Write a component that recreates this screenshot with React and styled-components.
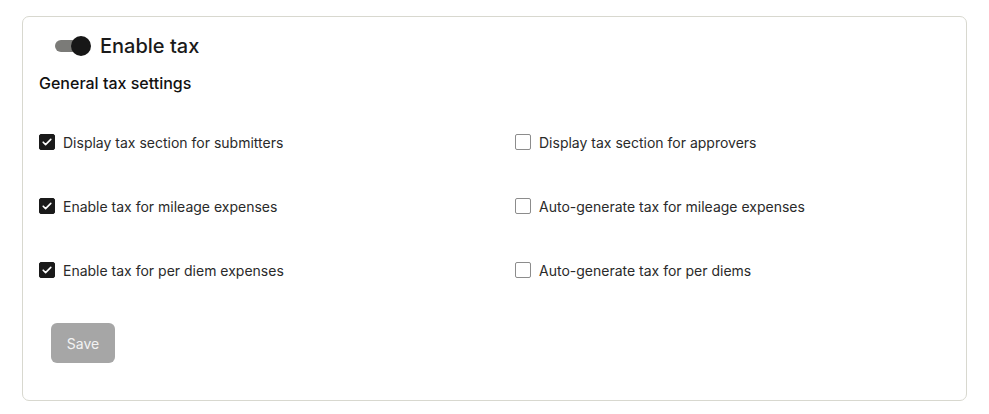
import React from 'react';
import styled, { createGlobalStyle } from 'styled-components';

const GlobalStyle = createGlobalStyle`
  body {
    margin: 0;
    background: #ffffff;
    font-family: Inter, 'Noto Sans', sans-serif;
    color: #1f1f1f;
  }
`;

const leftItems = [
  { label: 'Display tax section for submitters', checked: true },
  { label: 'Enable tax for mileage expenses', checked: true },
  { label: 'Enable tax for per diem expenses', checked: true },
];

const rightItems = [
  { label: 'Display tax section for approvers', checked: false },
  { label: 'Auto-generate tax for mileage expenses', checked: false },
  { label: 'Auto-generate tax for per diems', checked: false },
];

function App() {
  const rows = leftItems.map((item, i) => [item, rightItems[i]]);
  return (
    <Page>
      <GlobalStyle />
      <Card>
        <ToggleRow>
          <Switch>
            <Knob />
          </Switch>
          <Title>Enable tax</Title>
        </ToggleRow>
        <Heading>General tax settings</Heading>
        <Options>
          {rows.flat().map((item) => (
            <Option key={item.label}>
              <Box $checked={item.checked}>
                {item.checked && (
                  <svg width="12" height="12" viewBox="0 0 12 12" fill="none">
                    <path d="M2.2 6.2l2.4 2.4 5.2-5.2" stroke="#fff" strokeWidth="1.6" strokeLinecap="round" strokeLinejoin="round" />
                  </svg>
                )}
              </Box>
              <Label>{item.label}</Label>
            </Option>
          ))}
        </Options>
        <SaveButton disabled>Save</SaveButton>
      </Card>
    </Page>
  );
}

const Page = styled.div`
  padding: 16px 22px 12px 22px;
`;

const Card = styled.div`
  width: 945px;
  height: 385px;
  box-sizing: border-box;
  border: 1px solid #d8d8cf;
  border-radius: 7px;
  padding: 18px 16px 0 16px;
`;

const ToggleRow = styled.div`
  display: flex;
  align-items: center;
  gap: 9px;
  padding-left: 16px;
  height: 22px;
`;

const Switch = styled.div`
  position: relative;
  width: 30px;
  height: 12px;
  border-radius: 6px;
  background: #7b7b78;
  margin-right: 6px;
`;

const Knob = styled.div`
  position: absolute;
  right: -6px;
  top: -4px;
  width: 20px;
  height: 20px;
  border-radius: 50%;
  background: #171717;
`;

const Title = styled.span`
  font-size: 20px;
  font-weight: 500;
  color: #1a1a1a;
`;

const Heading = styled.div`
  margin-top: 16px;
  font-size: 16px;
  font-weight: 500;
  color: #111;
`;

const Options = styled.div`
  display: grid;
  grid-template-columns: 476px 1fr;
  grid-auto-rows: 64px;
  margin-top: 17px;
  align-items: center;
`;

const Option = styled.label`
  display: flex;
  align-items: center;
  gap: 8px;
`;

const Box = styled.span`
  width: 16px;
  height: 16px;
  box-sizing: border-box;
  border-radius: 2px;
  display: flex;
  align-items: center;
  justify-content: center;
  background: ${(p) => (p.$checked ? '#1a1a1a' : '#fff')};
  border: 1px solid ${(p) => (p.$checked ? '#1a1a1a' : '#8c8c8c')};
`;

const Label = styled.span`
  font-size: 14px;
  color: #2a2a2a;
`;

const SaveButton = styled.button`
  margin: 21px 0 0 12px;
  width: 64px;
  height: 40px;
  border: none;
  border-radius: 6px;
  background: #a6a6a6;
  color: #f3f3f3;
  font-family: Inter, sans-serif;
  font-size: 14px;
`;

export default App;
